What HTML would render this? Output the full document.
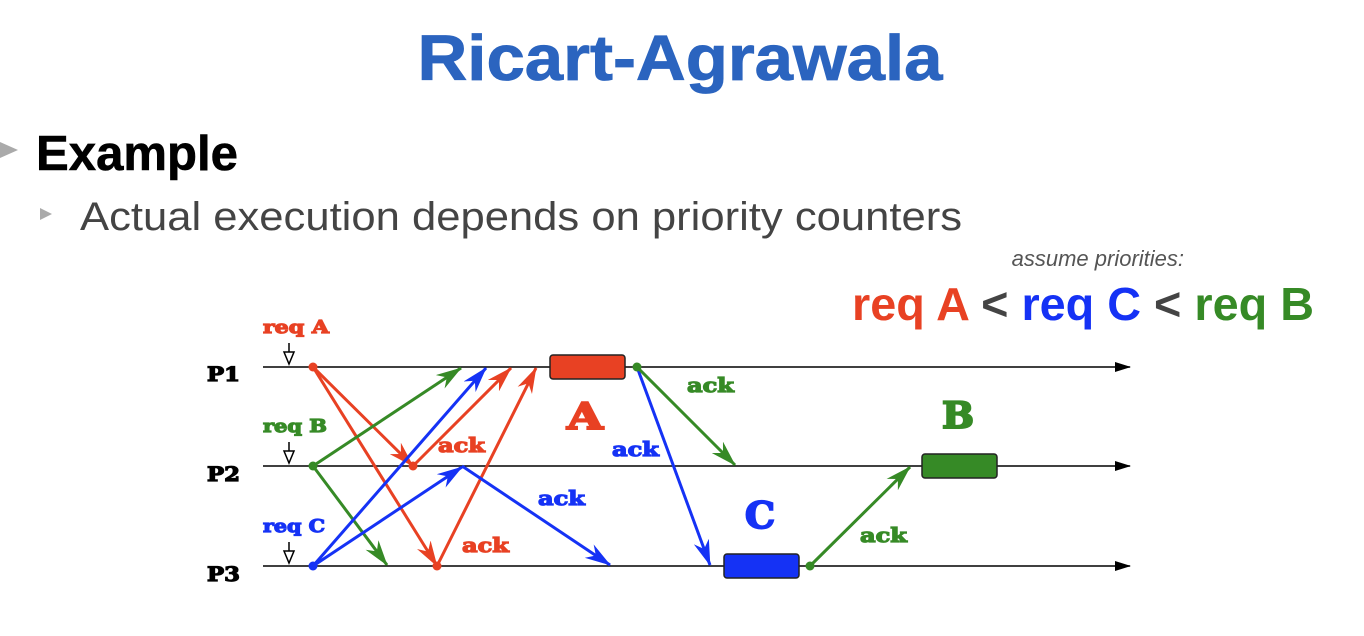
<!DOCTYPE html>
<html><head><meta charset="utf-8"><style>
html,body{margin:0;padding:0;background:#fff;width:1364px;height:636px;overflow:hidden}
svg{display:block}
</style></head><body>
<svg width="1364" height="636" viewBox="0 0 1364 636" xmlns="http://www.w3.org/2000/svg">
<defs>
<marker id="ar" viewBox="0 0 26 16" refX="25" refY="8" markerWidth="26" markerHeight="16" markerUnits="userSpaceOnUse" orient="auto"><path d="M0,0 L26,8 L0,16 L8,8 Z" fill="#e84123"/></marker>
<marker id="ag" viewBox="0 0 26 16" refX="25" refY="8" markerWidth="26" markerHeight="16" markerUnits="userSpaceOnUse" orient="auto"><path d="M0,0 L26,8 L0,16 L8,8 Z" fill="#368a26"/></marker>
<marker id="ab" viewBox="0 0 26 16" refX="25" refY="8" markerWidth="26" markerHeight="16" markerUnits="userSpaceOnUse" orient="auto"><path d="M0,0 L26,8 L0,16 L8,8 Z" fill="#1532f5"/></marker>
<marker id="ak" viewBox="0 0 16 10" refX="15" refY="5" markerWidth="16" markerHeight="10" markerUnits="userSpaceOnUse" orient="auto"><path d="M0,0 L16,5 L0,10 Z" fill="#000"/></marker>
</defs>
<text x="680" y="80" text-anchor="middle" font-family="Liberation Sans, sans-serif" font-weight="bold" font-size="64" fill="#2b64bf" stroke="#2b64bf" stroke-width="0.8" textLength="525" lengthAdjust="spacingAndGlyphs">Ricart-Agrawala</text>
<path d="M0,142 L18,150 L0,158 Z" fill="#aaa"/>
<text x="36" y="170" font-family="Liberation Sans, sans-serif" font-weight="bold" font-size="49" fill="#000" stroke="#000" stroke-width="0.6" textLength="202" lengthAdjust="spacingAndGlyphs">Example</text>
<path d="M40,208 L52,214 L40,220 Z" fill="#aaa"/>
<text x="80" y="230" font-family="Liberation Sans, sans-serif" font-size="40" fill="#444" textLength="882" lengthAdjust="spacingAndGlyphs">Actual execution depends on priority counters</text>
<text x="1184" y="266" text-anchor="end" font-family="Liberation Sans, sans-serif" font-style="italic" font-size="22" fill="#555">assume priorities:</text>
<text x="1314" y="320" text-anchor="end" font-family="Liberation Sans, sans-serif" font-weight="bold" font-size="46" textLength="462" lengthAdjust="spacingAndGlyphs"><tspan fill="#e84123">req A</tspan><tspan fill="#444"> &lt; </tspan><tspan fill="#1532f5">req C</tspan><tspan fill="#444"> &lt; </tspan><tspan fill="#368a26">req B</tspan></text>

<g font-family="DejaVu Serif, serif" font-weight="bold" stroke-width="1.2">
<text x="207" y="381" font-size="20" fill="#000" stroke="#000" textLength="33" lengthAdjust="spacingAndGlyphs">P1</text>
<text x="207" y="481" font-size="20" fill="#000" stroke="#000" textLength="33" lengthAdjust="spacingAndGlyphs">P2</text>
<text x="207" y="581" font-size="20" fill="#000" stroke="#000" textLength="33" lengthAdjust="spacingAndGlyphs">P3</text>
<text x="263" y="333" font-size="18" fill="#e84123" stroke="#e84123" textLength="66" lengthAdjust="spacingAndGlyphs">req A</text>
<text x="263" y="432" font-size="18" fill="#368a26" stroke="#368a26" textLength="64" lengthAdjust="spacingAndGlyphs">req B</text>
<text x="263" y="532" font-size="18" fill="#1532f5" stroke="#1532f5" textLength="62" lengthAdjust="spacingAndGlyphs">req C</text>
<text x="438" y="452" font-size="20" fill="#e84123" stroke="#e84123" textLength="47" lengthAdjust="spacingAndGlyphs">ack</text>
<text x="462" y="552" font-size="20" fill="#e84123" stroke="#e84123" textLength="47" lengthAdjust="spacingAndGlyphs">ack</text>
<text x="538" y="505" font-size="20" fill="#1532f5" stroke="#1532f5" textLength="47" lengthAdjust="spacingAndGlyphs">ack</text>
<text x="612" y="456" font-size="20" fill="#1532f5" stroke="#1532f5" textLength="47" lengthAdjust="spacingAndGlyphs">ack</text>
<text x="687" y="392" font-size="20" fill="#368a26" stroke="#368a26" textLength="47" lengthAdjust="spacingAndGlyphs">ack</text>
<text x="860" y="542" font-size="20" fill="#368a26" stroke="#368a26" textLength="47" lengthAdjust="spacingAndGlyphs">ack</text>
<text x="567" y="429" font-size="36" fill="#e84123" stroke="#e84123" stroke-width="2" textLength="36" lengthAdjust="spacingAndGlyphs">A</text>
<text x="942" y="428" font-size="36" fill="#368a26" stroke="#368a26" stroke-width="2" textLength="32" lengthAdjust="spacingAndGlyphs">B</text>
<text x="745" y="528" font-size="36" fill="#1532f5" stroke="#1532f5" stroke-width="2" textLength="30" lengthAdjust="spacingAndGlyphs">C</text>
</g>
<g stroke="#000" stroke-width="1.5" fill="none">
<line x1="263" y1="367" x2="1130" y2="367" marker-end="url(#ak)"/>
<line x1="263" y1="466" x2="1130" y2="466" marker-end="url(#ak)"/>
<line x1="263" y1="566" x2="1130" y2="566" marker-end="url(#ak)"/>
<line x1="289" y1="343" x2="289" y2="362"/><path d="M284,352 L294,352 L289,364 Z" fill="#fff"/>
<line x1="289" y1="442" x2="289" y2="461"/><path d="M284,451 L294,451 L289,463 Z" fill="#fff"/>
<line x1="289" y1="542" x2="289" y2="561"/><path d="M284,551 L294,551 L289,563 Z" fill="#fff"/>
</g>
<g stroke-width="3" fill="none">
<line x1="313" y1="367" x2="413" y2="466" stroke="#e84123" marker-end="url(#ar)"/>
<line x1="313" y1="367" x2="437" y2="566" stroke="#e84123" marker-end="url(#ar)"/>
<line x1="413" y1="466" x2="511" y2="368" stroke="#e84123" marker-end="url(#ar)"/>
<line x1="437" y1="566" x2="536" y2="368" stroke="#e84123" marker-end="url(#ar)"/>
<line x1="313" y1="466" x2="461" y2="368" stroke="#368a26" marker-end="url(#ag)"/>
<line x1="313" y1="466" x2="387" y2="565" stroke="#368a26" marker-end="url(#ag)"/>
<line x1="313" y1="566" x2="486" y2="368" stroke="#1532f5" marker-end="url(#ab)"/>
<line x1="313" y1="566" x2="462" y2="467" stroke="#1532f5" marker-end="url(#ab)"/>
<line x1="462" y1="466" x2="610" y2="565" stroke="#1532f5" marker-end="url(#ab)"/>
<line x1="637" y1="367" x2="710" y2="565" stroke="#1532f5" marker-end="url(#ab)"/>
<line x1="637" y1="367" x2="735" y2="465" stroke="#368a26" marker-end="url(#ag)"/>
<line x1="810" y1="566" x2="910" y2="467" stroke="#368a26" marker-end="url(#ag)"/>
</g>
<rect x="550" y="355" width="75" height="24" rx="3" fill="#e84123" stroke="#222" stroke-width="1.5"/>
<rect x="724" y="554" width="75" height="24" rx="3" fill="#1532f5" stroke="#222" stroke-width="1.5"/>
<rect x="922" y="454" width="75" height="24" rx="3" fill="#368a26" stroke="#222" stroke-width="1.5"/>
<circle cx="313" cy="367" r="4.5" fill="#e84123"/>
<circle cx="413" cy="466" r="4.5" fill="#e84123"/>
<circle cx="437" cy="566" r="4.5" fill="#e84123"/>
<circle cx="313" cy="466" r="4.5" fill="#368a26"/>
<circle cx="313" cy="566" r="4.5" fill="#1532f5"/>
<circle cx="637" cy="367" r="4.5" fill="#368a26"/>
<circle cx="810" cy="566" r="4.5" fill="#368a26"/>
</svg>
</body></html>
